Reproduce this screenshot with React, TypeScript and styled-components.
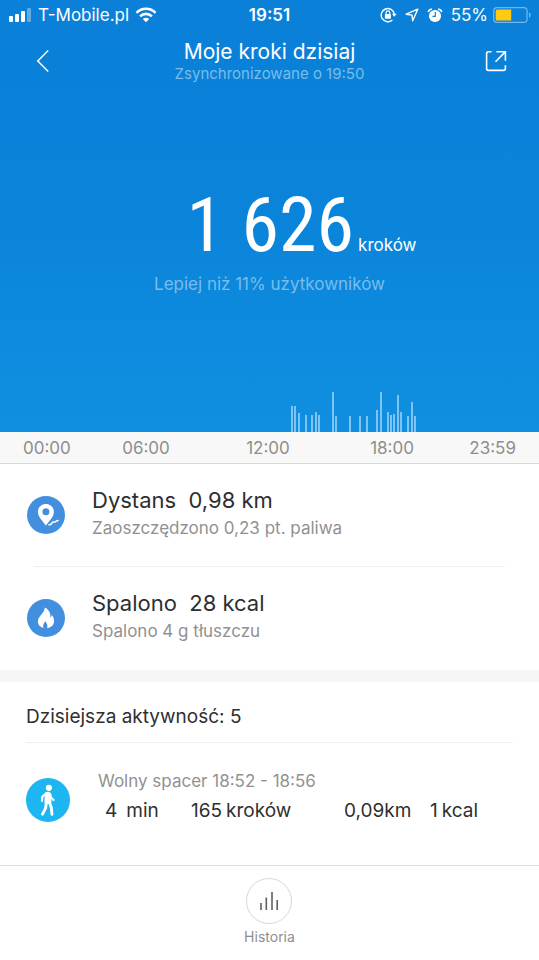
import React from "react";
import styled, { createGlobalStyle } from "styled-components";

const GlobalStyle = createGlobalStyle`
  *, *::before, *::after { box-sizing: border-box; }
  body {
    margin: 0;
    background: #fff;
    color: #2f2f2f;
    font-family: Inter, "Noto Sans", sans-serif;
  }
  h1, h2, p, ul { margin: 0; padding: 0; font-weight: 400; }
`;

const Page = styled.div`
  display: flex;
  flex-direction: column;
  min-height: 100vh;
`;

const Hero = styled.header`
  display: flex;
  flex-direction: column;
  height: 432px;
  color: #fff;
  background: linear-gradient(#0a80d8, #0a84da 50%, #108fe0);
`;

const StatusBar = styled.div`
  display: grid;
  grid-template-columns: 1fr auto 1fr;
  align-items: center;
  height: 30px;
  padding: 0 8px;
  font-size: 17px;
  line-height: 20px;
`;

const StatusGroup = styled.div<{ $end?: boolean }>`
  display: flex;
  align-items: center;
  gap: ${(p) => (p.$end ? 8 : 6)}px;
  justify-content: ${(p) => (p.$end ? "flex-end" : "flex-start")};
`;

const Clock = styled.time`
  font-weight: 600;
`;

const Battery = styled.span`
  display: flex;
  align-items: center;
  gap: 5px;
`;

const NavBar = styled.nav`
  display: grid;
  grid-template-columns: 40px 1fr 40px;
  align-items: center;
  height: 62px;
  padding: 0 23px;
  text-align: center;
`;

const IconButton = styled.button`
  display: grid;
  place-items: center;
  width: 40px;
  height: 40px;
  padding: 0;
  border: 0;
  background: none;
  color: inherit;
  cursor: pointer;
`;

const Title = styled.h1`
  font-size: 21px;
  line-height: 26px;
`;

const SyncNote = styled.p`
  font-size: 15px;
  line-height: 18px;
  color: #78bdec;
`;

const Summary = styled.section`
  flex: 1;
  display: flex;
  flex-direction: column;
  align-items: center;
  padding-top: 106px;
`;

const StepCount = styled.p`
  display: flex;
  align-items: baseline;
  gap: 4px;
  padding-left: 64px;
  font-size: 17px;
  line-height: 54px;
`;

const Steps = styled.strong`
  font-family: "Roboto Condensed", "Liberation Sans Narrow", Roboto, sans-serif;
  font-size: 76px;
  font-weight: 400;
`;

const Comparison = styled.p`
  font-size: 17px;
  line-height: 24px;
  color: #78bdec;
`;

const Chart = styled.svg`
  display: block;
  width: 100%;
  height: 40px;
`;

const TimeAxis = styled.div`
  display: grid;
  grid-template-columns: 4fr 5fr 5fr 4fr auto;
  height: 32px;
  padding: 0 23px;
  border-bottom: 1px solid #d9d9d9;
  background: #f8f8f8;
  color: #8e8e8e;
  font-size: 17px;
  line-height: 32px;
`;

const Metrics = styled.section`
  padding-bottom: 1px;
  border-bottom: 12px solid #f6f6f6;
`;

const Metric = styled.div`
  display: flex;
  align-items: center;
  gap: 27px;
  height: 102px;
  padding-left: 27px;
`;

const Details = styled.div`
  padding-bottom: 4px;
`;

const MetricTitle = styled.h2`
  font-size: 22px;
  line-height: 30px;
  white-space: pre;
`;

const Muted = styled.p`
  font-size: 17px;
  line-height: 26px;
  color: #919191;
`;

const Divider = styled.hr<{ $inset: number }>`
  height: 1px;
  margin: 0 ${(p) => p.$inset}px;
  border: 0;
  background: #efefef;
`;

const Disc = styled.span<{ $size: number; $color: string }>`
  display: grid;
  flex: none;
  place-items: center;
  width: ${(p) => p.$size}px;
  height: ${(p) => p.$size}px;
  border-radius: 50%;
  background: ${(p) => p.$color};
`;

const ActivityHeading = styled.h2`
  padding: 19px 26px 9px;
  font-size: 19px;
  line-height: 32px;
`;

const Activity = styled.article`
  display: flex;
  align-items: center;
  gap: 28px;
  height: 114px;
  padding: 0 26px;
`;

const ActivityStats = styled.ul`
  display: flex;
  padding-left: 7px;
  font-size: 19px;
  line-height: 34px;
  list-style: none;
`;

const Stat = styled.li<{ $width: number; $gap: number }>`
  display: flex;
  gap: ${(p) => p.$gap}px;
  width: ${(p) => p.$width}px;
`;

const Footer = styled.footer`
  flex: 1;
  display: flex;
  justify-content: center;
  align-items: flex-start;
  margin-top: 8px;
  padding-top: 12px;
  border-top: 1px solid #dcdcdc;
`;

const HistoryButton = styled.button`
  display: flex;
  flex-direction: column;
  align-items: center;
  gap: 3px;
  padding: 0;
  border: 0;
  background: none;
  color: #8e8e8e;
  font: inherit;
  font-size: 14px;
  line-height: 20px;
  cursor: pointer;
`;

const HistoryRing = styled.span`
  display: grid;
  place-items: center;
  width: 46px;
  height: 46px;
  border: 1px solid #d8d8d8;
  border-radius: 50%;
`;

const bars: [number, number][] = [
  [291, 26], [294, 26], [298, 19], [305, 17], [311, 17], [315, 20], [318, 17],
  [332, 40], [335, 16], [349, 16], [359, 16], [366, 16], [376, 22], [380, 40],
  [387, 20], [390, 17], [393, 18], [397, 37], [400, 20], [407, 16], [411, 30],
  [414, 16],
];

const SignalIcon = () => (
  <svg width="24" height="14" viewBox="0 0 24 14" fill="#fff" aria-hidden="true">
    <rect x="1" y="8" width="4" height="6" rx="1" />
    <rect x="7" y="6" width="4" height="8" rx="1" />
    <rect x="13" y="3" width="4" height="11" rx="1" />
    <rect x="19" y="0" width="4" height="14" rx="1" opacity=".35" />
  </svg>
);

const WifiIcon = () => (
  <svg width="22" height="16" viewBox="0 0 22 16" fill="none" stroke="#fff" strokeWidth="2.6" aria-hidden="true">
    <path d="M1.5 5.8C6.8.4 15.2.4 20.5 5.8" />
    <path d="M5.1 9.4c3.3-3.3 8.5-3.3 11.8 0" />
    <path d="M11 15.2 7.8 12c1.8-1.7 4.6-1.7 6.4 0Z" fill="#fff" stroke="none" />
  </svg>
);

const LockIcon = () => (
  <svg width="17" height="16" viewBox="0 0 17 16" fill="none" stroke="#fff" strokeWidth="1.4" aria-hidden="true">
    <path d="M12.4 12.9A6.6 6.6 0 1 1 14.3 7" />
    <path d="m11.9 6.7h4.8l-2.4 3.1Z" fill="#fff" stroke="none" />
    <rect x="4.9" y="7" width="6" height="4.7" rx=".7" fill="#fff" stroke="none" />
    <path d="M6.1 7.2V5.7a1.8 1.8 0 0 1 3.6 0v1.5" strokeWidth="1.2" />
  </svg>
);

const LocationIcon = () => (
  <svg width="14" height="14" viewBox="0 0 14 14" fill="none" stroke="#fff" strokeWidth="1.4" strokeLinejoin="round" aria-hidden="true">
    <path d="M12.8 1.2 1.2 6.2l5.8.9.7 5.7Z" />
  </svg>
);

const AlarmIcon = () => (
  <svg width="16" height="15" viewBox="0 0 16 15" aria-hidden="true">
    <circle cx="8" cy="8" r="6.1" fill="#fff" />
    <path d="M1.4 4.1A3 3 0 0 1 5 1.3M14.6 4.1A3 3 0 0 0 11 1.3" fill="none" stroke="#fff" strokeWidth="1.7" />
    <path d="M8.3 4v4.4H5.5" fill="none" stroke="#0a80d8" strokeWidth="1.2" />
  </svg>
);

const BatteryIcon = () => (
  <svg width="38" height="16" viewBox="0 0 38 16" aria-hidden="true">
    <rect x=".7" y=".7" width="33.4" height="14.6" rx="3.4" fill="none" stroke="#72b7ec" strokeWidth="1.2" />
    <path d="M36 5.3c2.2.8 2.2 4.6 0 5.4Z" fill="#72b7ec" />
    <path d="M4.2 2.5h14v11h-14a1.5 1.5 0 0 1-1.5-1.5V4a1.5 1.5 0 0 1 1.5-1.5Z" fill="#ffcb12" />
  </svg>
);

const BackIcon = () => (
  <svg width="14" height="24" viewBox="0 0 14 24" fill="none" stroke="#fff" strokeWidth="1.5" aria-hidden="true">
    <path d="M12.2 1.5 1.8 12l10.4 10.5" />
  </svg>
);

const ShareIcon = () => (
  <svg width="22" height="22" viewBox="0 0 22 22" fill="none" stroke="#fff" strokeWidth="1.6" aria-hidden="true">
    <path d="M6.5 1.7H3.4c-1.3 0-1.8.6-1.8 1.8v15c0 1.3.6 1.9 1.8 1.9h15.2c1.2 0 1.8-.6 1.8-1.9v-3.2" />
    <path d="M11.4 1.7h9v9M20.2 1.9l-9.7 9.8" />
  </svg>
);

const PinIcon = () => (
  <svg width="38" height="38" viewBox="0 0 38 38" fill="none" aria-hidden="true">
    <path fill="#fff" fillRule="evenodd" d="M18.9 8c-4.5 0-8 3.4-8 7.8 0 5 4.9 9.4 8 13.8 3.1-4.4 8-8.8 8-13.8 0-4.4-3.5-7.8-8-7.8Zm0 4.3a3.5 3.5 0 1 1 0 7 3.5 3.5 0 0 1 0-7Z" />
    <path stroke="#fff" strokeWidth="1.5" strokeLinecap="round" d="M21.9 28.8c2.2.1 2.4-.9 3.1-2 .9-1.4 1.9-.4 3.1-.8 1.3-.4 1.1-1.4 3-1.5" />
  </svg>
);

const FlameIcon = () => (
  <svg width="38" height="38" viewBox="0 0 38 38" fill="#fff" aria-hidden="true">
    <path d="M17.7 8.5c.6 4.9-6.8 8.6-6.8 14.1 0 3.3 2.1 5.6 5.6 6.5-.9-2.8-.1-4.8 2.2-6.9.2 1.8 2.4 3.3 1.5 7 4.4-.8 6.9-3.4 6.9-7.1 0-2.8-1.1-4.9-2.4-6.2-.1 1.2-.6 2.2-1.4 2.6.6-4.6-1.4-7.8-5.6-10Z" />
  </svg>
);

const WalkIcon = () => (
  <svg width="44" height="44" viewBox="0 0 44 44" fill="none" stroke="#fff" strokeLinecap="round" strokeLinejoin="round" aria-hidden="true">
    <circle cx="22.9" cy="9.8" r="3.1" fill="#fff" stroke="none" />
    <path d="m20 15.5 2-.6 1.8.9.5 8.4-4.7.3Z" fill="#fff" strokeWidth="2.4" />
    <path d="m19.6 15.8-3.3 3-.3 4M24 16.2l1.2 3.6 2.4 2.2" strokeWidth="2.2" />
    <path d="m20.5 24-.9 6.2-3.1 5.9M23.3 24l2 5.5.7 6.8" strokeWidth="2.9" />
  </svg>
);

const HistoryIcon = () => (
  <svg width="20" height="20" viewBox="0 0 20 20" stroke="#606060" strokeWidth="1.6" aria-hidden="true">
    <path d="M2 12v7M7.3 6.5V19M13 1v18M18.2 9v10" />
  </svg>
);

export default function App() {
  return (
    <Page>
      <GlobalStyle />
      <Hero>
        <StatusBar>
          <StatusGroup>
            <SignalIcon />
            <span>T-Mobile.pl</span>
            <WifiIcon />
          </StatusGroup>
          <Clock>19:51</Clock>
          <StatusGroup $end>
            <LockIcon />
            <LocationIcon />
            <AlarmIcon />
            <Battery>
              55%
              <BatteryIcon />
            </Battery>
          </StatusGroup>
        </StatusBar>
        <NavBar>
          <IconButton type="button" aria-label="Wstecz"><BackIcon /></IconButton>
          <div>
            <Title>Moje kroki dzisiaj</Title>
            <SyncNote>Zsynchronizowane o 19:50</SyncNote>
          </div>
          <IconButton type="button" aria-label="Udostępnij"><ShareIcon /></IconButton>
        </NavBar>
        <Summary>
          <StepCount><Steps>1 626</Steps> kroków</StepCount>
          <Comparison>Lepiej niż 11% użytkowników</Comparison>
        </Summary>
        <Chart viewBox="0 0 539 40" preserveAspectRatio="none" role="img" aria-label="Kroki w ciągu dnia">
          {bars.map(([x, h]) => (
            <rect key={x} x={x} y={40 - h} width="2" height={h} fill="#7cc4f4" />
          ))}
        </Chart>
      </Hero>
      <TimeAxis>
        <span>00:00</span>
        <span>06:00</span>
        <span>12:00</span>
        <span>18:00</span>
        <span>23:59</span>
      </TimeAxis>
      <Metrics>
        <Metric>
          <Disc $size={38} $color="#428fe0"><PinIcon /></Disc>
          <Details>
            <MetricTitle>{"Dystans  0,98 km"}</MetricTitle>
            <Muted>Zaoszczędzono 0,23 pt. paliwa</Muted>
          </Details>
        </Metric>
        <Divider $inset={34} />
        <Metric>
          <Disc $size={38} $color="#428fe0"><FlameIcon /></Disc>
          <Details>
            <MetricTitle>{"Spalono  28 kcal"}</MetricTitle>
            <Muted>Spalono 4 g tłuszczu</Muted>
          </Details>
        </Metric>
      </Metrics>
      <section>
        <ActivityHeading>Dzisiejsza aktywność: 5</ActivityHeading>
        <Divider $inset={26} />
        <Activity>
          <Disc $size={44} $color="#1eb6f0"><WalkIcon /></Disc>
          <Details>
            <Muted>Wolny spacer 18:52 - 18:56</Muted>
            <ActivityStats>
              <Stat $width={86} $gap={9}><span>4</span><span>min</span></Stat>
              <Stat $width={153} $gap={4}><span>165</span><span>kroków</span></Stat>
              <Stat $width={86} $gap={0}><span>0,09</span><span>km</span></Stat>
              <Stat $width={60} $gap={4}><span>1</span><span>kcal</span></Stat>
            </ActivityStats>
          </Details>
        </Activity>
      </section>
      <Footer>
        <HistoryButton type="button">
          <HistoryRing><HistoryIcon /></HistoryRing>
          Historia
        </HistoryButton>
      </Footer>
    </Page>
  );
}
